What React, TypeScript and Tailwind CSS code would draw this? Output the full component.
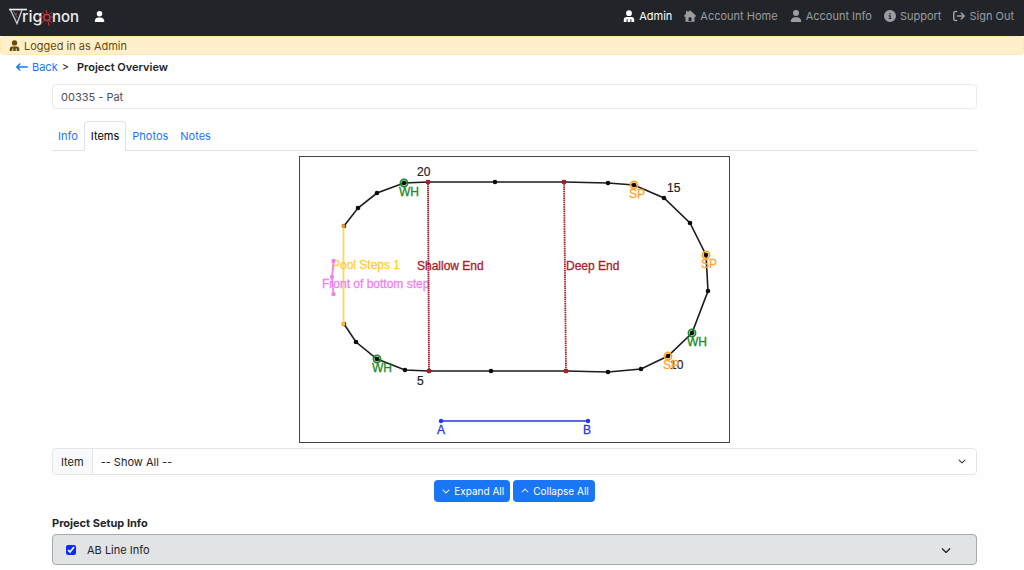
import type { ReactNode } from 'react';
import {
  FaArrowLeftLong,
  FaArrowRightFromBracket,
  FaChevronDown,
  FaChevronUp,
  FaCircleInfo,
  FaUser,
} from 'react-icons/fa6';

interface NavLinkProps {
  icon: ReactNode;
  label: string;
  active?: boolean;
}

interface Point {
  x: number;
  y: number;
}

interface Marker extends Point {
  label: string;
  color: string;
}

const poolOutline: Point[] = [
  { x: 44, y: 70 },
  { x: 58, y: 52 },
  { x: 77, y: 37 },
  { x: 104, y: 27 },
  { x: 128, y: 26 },
  { x: 195, y: 26 },
  { x: 264, y: 26 },
  { x: 308, y: 27 },
  { x: 334, y: 29 },
  { x: 364, y: 42 },
  { x: 390, y: 67 },
  { x: 406, y: 99 },
  { x: 408, y: 135 },
  { x: 392, y: 177 },
  { x: 368, y: 200 },
  { x: 341, y: 213 },
  { x: 308, y: 216 },
  { x: 266, y: 215 },
  { x: 191, y: 215 },
  { x: 129, y: 215 },
  { x: 105, y: 214 },
  { x: 77, y: 203 },
  { x: 56, y: 186 },
  { x: 44, y: 168 },
];

const markers: Marker[] = [
  { x: 104, y: 27, label: 'WH', color: '#1a8a26' },
  { x: 334, y: 29, label: 'SP', color: '#ffa52b' },
  { x: 406, y: 99, label: 'SP', color: '#ffa52b' },
  { x: 392, y: 177, label: 'WH', color: '#1a8a26' },
  { x: 368, y: 200, label: 'SP', color: '#ffa52b' },
  { x: 77, y: 203, label: 'WH', color: '#1a8a26' },
];

const tabs = ['Info', 'Items', 'Photos', 'Notes'];

function Logo() {
  return (
    <svg viewBox="0 0 72 22" className="h-[22px] w-[72px]" role="img" aria-label="Trigonon">
      <path d="M1 4.500h18" fill="none" stroke="#f0f0f0" strokeWidth="1.600" />
      <path d="M2.500 5l6.500 13.500L14 5" fill="none" stroke="#cfcfcf" strokeWidth="1.300" />
      <path d="M5 5.500l4 7" fill="none" stroke="#8a8a8a" strokeWidth="0.700" />
      <circle cx="8" cy="9" r="0.900" fill="#d23a3f" />
      <text x="14" y="17" fontSize="16" fontWeight="500" fill="#ededed" fontFamily="Inter, sans-serif">rig</text>
      <g stroke="#c9343a" fill="none">
        <circle cx="39" cy="12.500" r="3" strokeWidth="1.600" />
        <path d="M38 5l1 4M40 16l1 5M31 12h4M43 12h3M34 7l3 3M44 7l-3 3M34 18l3-3M44 18l-3-3" strokeWidth="1" />
      </g>
      <text x="44" y="17" fontSize="15" fontWeight="500" fill="#ededed" fontFamily="Inter, sans-serif">non</text>
    </svg>
  );
}

function HouseIcon() {
  return (
    <svg viewBox="0 0 12 12" className="size-3" fill="currentColor" aria-hidden="true">
      <path
        fillRule="evenodd"
        d="M6 0.300L3.700 2.200V1H2v2.700L0.200 5.400v1.300h1.300v5.100h9V6.700h1.300V5.400zM4.500 11V8.400a1.500 1.500 0 0 1 3 0V11z"
      />
    </svg>
  );
}

function AdminIcon({ className }: { className: string }) {
  return (
    <svg viewBox="0 0 12 12" className={className} fill="currentColor" aria-hidden="true">
      <circle cx="6" cy="3.200" r="2.900" />
      <path
        fillRule="evenodd"
        d="M3.500 7h5c1.700 0 2.700 1.200 2.700 2.700V12H0.800V9.700C0.800 8.200 1.800 7 3.500 7zM3.600 9.300h1V12h-1zM7.400 9.300h1V12h-1z"
      />
    </svg>
  );
}

function NavLink({ icon, label, active = false }: NavLinkProps) {
  return (
    <a href="#" className={`flex items-center gap-1 ${active ? 'text-white' : 'text-[#9b9d9f]'}`}>
      {icon}
      {label}
    </a>
  );
}

function PoolDiagram() {
  return (
    <svg
      viewBox="0 1 429 285"
      className="w-[431px] max-w-full border border-[#444]"
      fontFamily="'Liberation Sans', sans-serif"
      fontSize="12"
      role="img"
      aria-label="Pool diagram"
    >
      <polyline
        points={poolOutline.map((p) => `${p.x},${p.y}`).join(' ')}
        fill="none"
        stroke="#1c1c1c"
        strokeWidth="1.600"
      />
      {poolOutline.map((p) => (
        <circle key={`${p.x}-${p.y}`} cx={p.x} cy={p.y} r="2.300" fill="#0c0c0c" />
      ))}

      <g fill="#222" stroke="#222" strokeWidth="0.200">
        <text x="117" y="20">20</text>
        <text x="367" y="36">15</text>
        <text x="370" y="213">10</text>
        <text x="117" y="229">5</text>
      </g>

      {markers.map((m) => (
        <g key={`${m.x}-${m.y}`} stroke={m.color}>
          <circle cx={m.x} cy={m.y} r="3.600" fill="none" strokeWidth="1.700" />
          <text x={m.x - 5} y={m.y + 13} fill={m.color} strokeWidth="0.300">{m.label}</text>
        </g>
      ))}

      {/* steps */}
      <path d="M43.500 70V168" stroke="#ffd84f" strokeWidth="1.800" />
      <circle cx="43.500" cy="70" r="2" fill="#dfa02c" />
      <circle cx="43.500" cy="168" r="2" fill="#ffbf2e" />
      <text x="32" y="113" fill="#ffce35" stroke="#ffce35" strokeWidth="0.300">Pool Steps 1</text>
      <path d="M33.500 105L32 121L33.500 138" fill="none" stroke="#ee82ee" strokeWidth="1.700" />
      <circle cx="33.500" cy="105" r="2.200" fill="#ee82ee" />
      <circle cx="32" cy="121" r="2.200" fill="#ee82ee" />
      <circle cx="33.500" cy="138" r="2.200" fill="#ee82ee" />
      <text x="22" y="132" fill="#ee82ee" stroke="#ee82ee" strokeWidth="0.300">Front of bottom step</text>

      {/* depth breaks */}
      <g stroke="#a5232c" strokeWidth="1.800">
        <path d="M128 26L129 215" strokeDasharray="1.500 0.500" />
        <path d="M264 26L266 215" strokeDasharray="1.500 0.700" />
      </g>
      <g fill="#b01f28">
        <circle cx="128" cy="26" r="2.300" />
        <circle cx="129" cy="215" r="2.300" />
        <circle cx="264" cy="26" r="2.300" />
        <circle cx="266" cy="215" r="2.300" />
      </g>
      <g fill="#a5232c" stroke="#a5232c" strokeWidth="0.300">
        <text x="117" y="114">Shallow End</text>
        <text x="266" y="114">Deep End</text>
      </g>

      {/* AB line */}
      <path d="M141 265H288" stroke="#2436f0" strokeWidth="1.700" />
      <circle cx="141" cy="265" r="2.200" fill="#2436f0" />
      <circle cx="288" cy="265" r="2.200" fill="#2436f0" />
      <g fill="#2436f0" stroke="#2436f0" strokeWidth="0.300">
        <text x="137" y="278">A</text>
        <text x="283" y="278">B</text>
      </g>
    </svg>
  );
}

export default function App() {
  return (
    <div className="min-h-screen bg-[#fefefe] font-['Inter',sans-serif] text-[11px] leading-4 text-[#212529]">
      <header className="flex h-9 items-center justify-between bg-[#212529] pr-[10px] pl-2">
        <div className="flex items-center gap-[14px] pb-1">
          <a href="#">
            <Logo />
          </a>
          <a href="#" aria-label="Account" className="text-white">
            <FaUser className="size-[11px]" />
          </a>
        </div>
        <nav className="flex items-center gap-3 pb-1">
          <NavLink active icon={<AdminIcon className="size-3" />} label="Admin" />
          <NavLink icon={<HouseIcon />} label="Account Home" />
          <NavLink icon={<FaUser className="size-3" />} label="Account Info" />
          <NavLink icon={<FaCircleInfo className="size-3" />} label="Support" />
          <NavLink icon={<FaArrowRightFromBracket className="size-3" />} label="Sign Out" />
        </nav>
      </header>

      <div className="flex h-[19px] items-center gap-1 rounded border border-[#ffe9b0] bg-[#fff0cb] px-2 text-[#664d03]">
        <AdminIcon className="size-[11px]" />
        Logged in as Admin
      </div>

      <div className="flex items-center gap-1 px-4 py-1">
        <a href="#" className="flex items-center gap-1 text-[#1a76f5]">
          <FaArrowLeftLong className="size-3" />
          Back
        </a>
        <span>&gt;</span>
        <h1 className="pl-1 font-semibold">Project Overview</h1>
      </div>

      <main className="pt-[5px] pr-[47px] pl-[52px]">
        <input
          type="text"
          aria-label="Project"
          defaultValue="00335 - Pat"
          className="block h-[25px] w-full rounded border border-[#e9ebee] bg-transparent px-2 text-[#495057]"
        />

        <div role="tablist" className="mt-3 flex border-b border-[#dee2e6]">
          {tabs.map((tab) => (
            <button
              key={tab}
              type="button"
              role="tab"
              aria-selected={tab === 'Items'}
              className={
                tab === 'Items'
                  ? '-mb-px h-[30px] rounded-t border border-[#dee2e6] border-b-[#fefefe] bg-[#fefefe] px-[6px] text-black'
                  : 'h-[29px] px-[6px] text-[#1a76f5]'
              }
            >
              {tab}
            </button>
          ))}
        </div>

        <div className="mt-[5px] flex justify-center">
          <PoolDiagram />
        </div>

        <div className="mt-[5px] flex h-[27px] rounded border border-[#e3e6e9]">
          <label htmlFor="item" className="flex items-center rounded-l border-r border-[#e3e6e9] bg-[#f8f9fa] px-2">
            Item
          </label>
          <div className="relative flex-1">
            <select id="item" className="h-full w-full appearance-none bg-transparent px-2">
              <option>-- Show All --</option>
            </select>
            <FaChevronDown className="pointer-events-none absolute top-2 right-[10px] size-2" />
          </div>
        </div>

        <div className="mt-[5px] flex justify-center gap-[3px] text-[10px] text-white">
          <button type="button" className="flex h-[22px] items-center gap-1 rounded-sm bg-[#1a76f5] pr-[6px] pl-2">
            <FaChevronDown className="size-2" />
            Expand All
          </button>
          <button type="button" className="flex h-[22px] items-center gap-1 rounded-sm bg-[#1a76f5] pr-[6px] pl-2">
            <FaChevronUp className="size-2" />
            Collapse All
          </button>
        </div>

        <h2 className="mt-[13px] font-bold">Project Setup Info</h2>
        <div className="mt-[3px] flex h-[31px] items-center rounded border border-[#a4a9ae] bg-[#e2e3e5] pr-[25px] pl-[13px]">
          <input id="ab-line" type="checkbox" defaultChecked className="size-[10px] accent-[#0f2bff]" />
          <label htmlFor="ab-line" className="flex-1 pl-[11px]">AB Line Info</label>
          <button type="button" aria-label="Toggle AB Line Info">
            <FaChevronDown className="size-[10px]" />
          </button>
        </div>
      </main>
    </div>
  );
}
